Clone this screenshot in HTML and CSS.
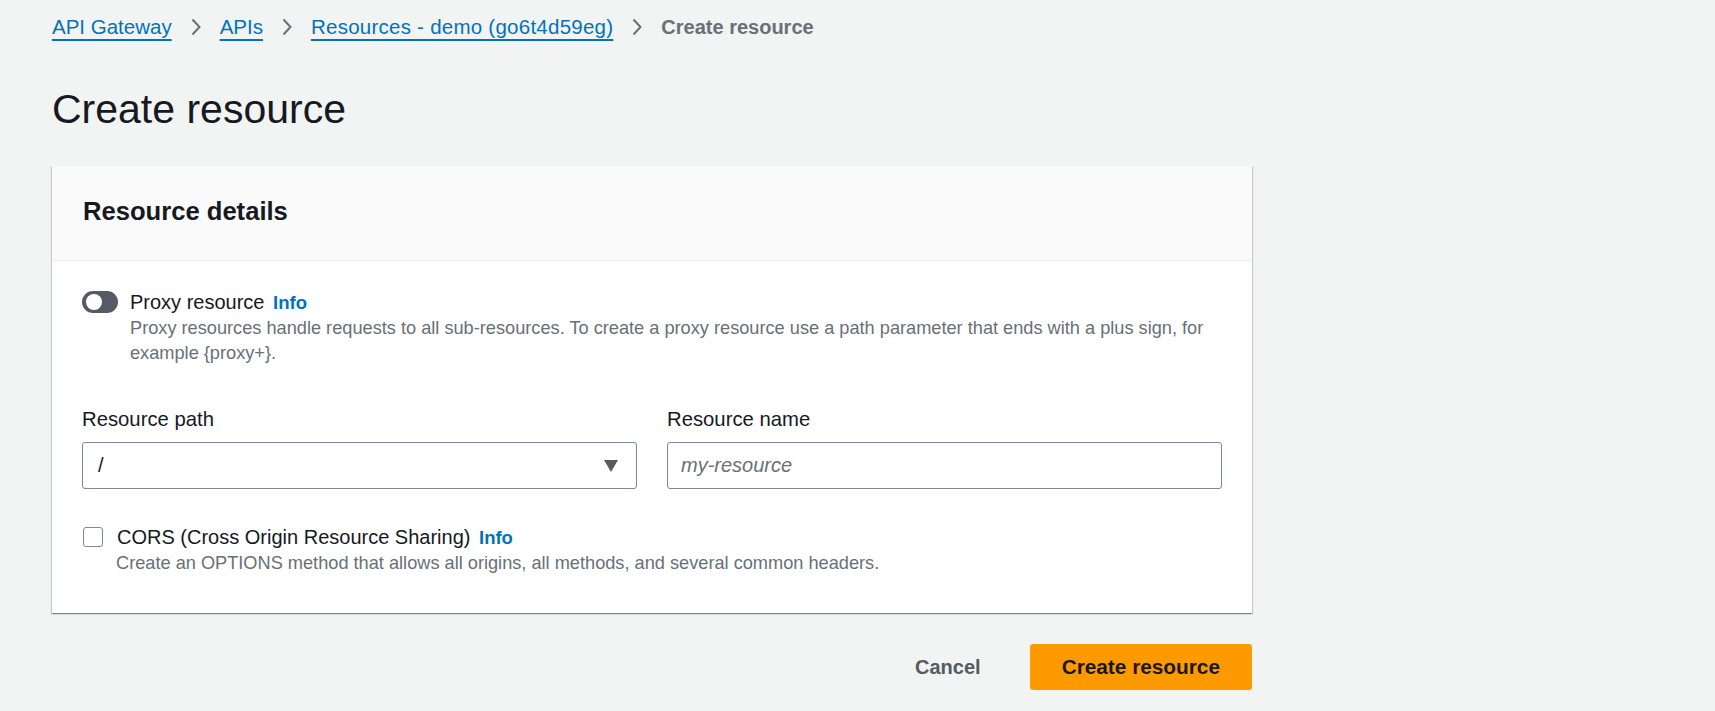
FILE: index.html
```html
<!DOCTYPE html>
<html lang="en">
<head>
<meta charset="utf-8">
<title>Create resource</title>
<link rel="stylesheet" href="styles.css">
</head>
<body>
<div class="page">
  <nav class="crumbs">
    <a href="#">API Gateway</a>
    <svg class="sep" viewBox="0 0 12 18" width="12" height="18"><path d="M2.5 1.5 L9.5 9 L2.5 16.5" fill="none" stroke="#687078" stroke-width="2"/></svg>
    <a href="#">APIs</a>
    <svg class="sep" viewBox="0 0 12 18" width="12" height="18"><path d="M2.5 1.5 L9.5 9 L2.5 16.5" fill="none" stroke="#687078" stroke-width="2"/></svg>
    <a class="wide" href="#">Resources - demo (go6t4d59eg)</a>
    <svg class="sep" viewBox="0 0 12 18" width="12" height="18"><path d="M2.5 1.5 L9.5 9 L2.5 16.5" fill="none" stroke="#687078" stroke-width="2"/></svg>
    <span class="current">Create resource</span>
  </nav>

  <h1 class="title">Create resource</h1>

  <section class="card">
    <header class="card-head">
      <h2 class="card-title">Resource details</h2>
    </header>
    <div class="card-body">
      <div class="toggle-field">
        <div class="toggle-row">
          <span class="toggle"><span class="knob"></span></span>
          <span class="field-label">Proxy resource <a class="info" href="#">Info</a></span>
        </div>
        <p class="desc toggle-desc">Proxy resources handle requests to all sub-resources. To create a proxy resource use a path parameter that ends with a plus sign, for example {proxy+}.</p>
      </div>

      <div class="grid">
        <div class="field">
          <div class="label">Resource path</div>
          <div class="control select">
            <span class="value">/</span>
            <svg class="caret" viewBox="0 0 16 14" width="16" height="14"><path d="M1 1 H15 L8 13 Z" fill="#545b64"/></svg>
          </div>
        </div>
        <div class="field">
          <div class="label">Resource name</div>
          <div class="control input">
            <span class="placeholder">my-resource</span>
          </div>
        </div>
      </div>

      <div class="check-field">
        <div class="check-row">
          <span class="checkbox"></span>
          <span class="field-label">CORS (Cross Origin Resource Sharing) <a class="info" href="#">Info</a></span>
        </div>
        <p class="desc check-desc">Create an OPTIONS method that allows all origins, all methods, and several common headers.</p>
      </div>
    </div>
  </section>

  <div class="actions">
    <button class="btn-link" type="button">Cancel</button>
    <button class="btn-primary" type="button">Create resource</button>
  </div>
</div>
</body>
</html>
```

FILE: styles.css
```css
* { box-sizing: border-box; }
html, body { margin: 0; padding: 0; }
body {
  background: #f2f3f3;
  font-family: "Liberation Sans", Arial, sans-serif;
  color: #16191f;
}
.page {
  width: 1200px;
  margin-left: 52px;
  padding-top: 13px;
}
.crumbs {
  display: flex;
  align-items: center;
  height: 28px;
  font-size: 20.5px;
  line-height: 28px;
}
.crumbs a {
  color: #0073bb;
  text-decoration: underline;
  text-underline-offset: 5px;
  text-decoration-thickness: 1.5px;
}
.crumbs .wide { letter-spacing: 0.25px; }
.sep { margin: 0 18px; flex: none; }
.current { color: #687078; font-weight: bold; font-size: 20px; }

.title {
  font-size: 41px;
  font-weight: normal;
  line-height: 48px;
  margin: 44px 0 33px;
}

.card {
  background: #fff;
  box-shadow: 0 1px 1px 0 rgba(0, 28, 36, 0.3), 1px 1px 1px 0 rgba(0, 28, 36, 0.15), -1px 1px 1px 0 rgba(0, 28, 36, 0.15);
}
.card-head {
  background: #fafafa;
  height: 95px;
  border-bottom: 1px solid #eaeded;
  padding: 28px 31px 0;
}
.card-title {
  margin: 0;
  font-size: 25.6px;
  line-height: 34px;
  font-weight: bold;
}
.card-body {
  padding: 27px 30px 37px 30px;
}
.toggle-row, .check-row {
  display: flex;
  align-items: center;
  height: 28px;
  font-size: 20px;
  line-height: 28px;
}
.toggle-row { gap: 12px; }
.check-row { gap: 14px; }
.toggle {
  position: relative;
  width: 36px;
  height: 22px;
  border-radius: 11px;
  background: #545b64;
  flex: none;
}
.knob {
  position: absolute;
  left: 4px;
  top: 3px;
  width: 16px;
  height: 16px;
  border-radius: 50%;
  background: #fff;
}
.info {
  color: #0073bb;
  font-weight: bold;
  font-size: 18.5px;
  text-decoration: none;
  margin-left: 3px;
}
.desc {
  margin: 0;
  font-size: 18.2px;
  line-height: 25px;
  color: #687078;
}
.toggle-desc { margin-left: 48px; }
.check-desc { margin-left: 34px; }

.grid {
  display: grid;
  grid-template-columns: 1fr 1fr;
  column-gap: 30px;
  margin-top: 39px;
}
.label {
  font-size: 20.3px;
  line-height: 28px;
  margin-bottom: 9px;
}
.control {
  height: 47px;
  border: 1px solid #7d8998;
  border-radius: 3px;
  display: flex;
  align-items: center;
  font-size: 20px;
}
.select { padding: 0 17px 0 15px; justify-content: space-between; }
.input { padding: 0 13px; }
.placeholder { color: #687078; font-style: italic; }

.check-field { margin-top: 34px; }
.checkbox {
  width: 20px;
  height: 20px;
  border: 1.5px solid #7d8998;
  border-radius: 3px;
  flex: none;
  margin-left: 1px;
}

.actions {
  display: flex;
  justify-content: flex-end;
  align-items: center;
  margin-top: 31px;
}
.btn-link {
  background: none;
  border: none;
  font-family: inherit;
  font-size: 20px;
  font-weight: bold;
  color: #545b64;
  padding: 0 28px;
  margin-right: 21px;
  height: 46px;
}
.btn-primary {
  height: 46px;
  padding: 0 32px;
  background: #ff9900;
  border: none;
  border-radius: 3px;
  font-family: inherit;
  font-size: 20.8px;
  font-weight: bold;
  color: #16191f;
}
```
